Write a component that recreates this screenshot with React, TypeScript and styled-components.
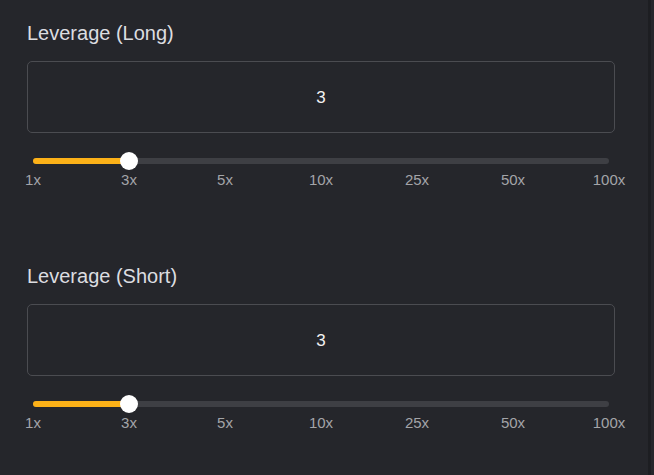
import React from 'react';
import styled, { createGlobalStyle } from 'styled-components';

const GlobalStyle = createGlobalStyle`
  html, body {
    margin: 0;
    padding: 0;
    background: #25262b;
  }
  body {
    font-family: "Liberation Sans", Arial, sans-serif;
  }
`;

const Page = styled.div`
  width: 651px;
  height: 475px;
  box-sizing: border-box;
  padding: 20px 0 0 27px;
  background: #25262b;
  border-right: 3px solid #1d1e22;
  display: flex;
  flex-direction: column;
  gap: 74px;
`;

const Section = styled.div`
  width: 588px;
  display: flex;
  flex-direction: column;
`;

const Title = styled.div`
  font-size: 20px;
  line-height: 26px;
  color: #dcdde0;
  margin-bottom: 15px;
`;

const ValueBox = styled.div`
  height: 72px;
  box-sizing: border-box;
  padding-top: 2px;
  border: 1px solid #4b4c51;
  border-radius: 5px;
  display: flex;
  align-items: center;
  justify-content: center;
  font-size: 17px;
  color: #f2f2f2;
`;

const SliderWrap = styled.div`
  padding: 0 6px;
  margin-top: 25px;
`;

const Track = styled.div`
  position: relative;
  height: 6px;
  border-radius: 3px;
  background: #3e3f44;
`;

const Fill = styled.div`
  position: absolute;
  left: 0;
  top: 0;
  bottom: 0;
  border-radius: 3px;
  background: #fcb118;
`;

const Thumb = styled.div`
  position: absolute;
  top: 50%;
  width: 18px;
  height: 18px;
  margin: -9px 0 0 -9px;
  border-radius: 50%;
  background: #ffffff;
`;

const Marks = styled.div`
  display: flex;
  justify-content: space-between;
  margin: 7px -20px 0;
`;

const Mark = styled.span`
  width: 40px;
  text-align: center;
  font-size: 15px;
  line-height: 18px;
  color: #a3a4a8;
`;

const marks = ['1x', '3x', '5x', '10x', '25x', '50x', '100x'];

const LeverageField = ({ label, value, step }: { label: string; value: string; step: number }) => {
  const pct = (step / (marks.length - 1)) * 100;
  return (
    <Section>
      <Title>{label}</Title>
      <ValueBox>{value}</ValueBox>
      <SliderWrap>
        <Track>
          <Fill style={{ width: `${pct}%` }} />
          <Thumb style={{ left: `${pct}%` }} />
        </Track>
        <Marks>
          {marks.map((m) => (
            <Mark key={m}>{m}</Mark>
          ))}
        </Marks>
      </SliderWrap>
    </Section>
  );
};

export default function App() {
  return (
    <>
      <GlobalStyle />
      <Page>
        <LeverageField label="Leverage (Long)" value="3" step={1} />
        <LeverageField label="Leverage (Short)" value="3" step={1} />
      </Page>
    </>
  );
}
